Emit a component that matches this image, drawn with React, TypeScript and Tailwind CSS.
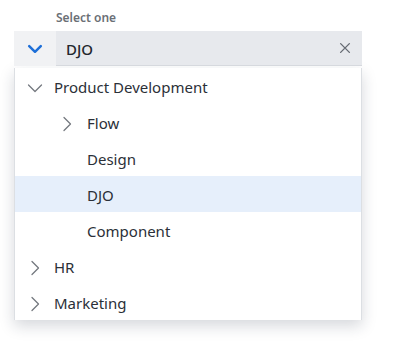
import React from "react";

type Node = { label: string; depth: number; chevron?: "down" | "right"; selected?: boolean };

const rows: Node[] = [
    { label: "Product Development", depth: 0, chevron: "down" },
    { label: "Flow", depth: 1, chevron: "right" },
    { label: "Design", depth: 1 },
    { label: "DJO", depth: 1, selected: true },
    { label: "Component", depth: 1 },
    { label: "HR", depth: 0, chevron: "right" },
    { label: "Marketing", depth: 0, chevron: "right" },
];

function Chevron({ dir, className }: { dir: "down" | "right"; className?: string }) {
    return (
        <svg viewBox="0 0 16 16" className={className} fill="none" stroke="currentColor" strokeWidth={1.25} strokeLinecap="round" strokeLinejoin="round">
            {dir === "down" ? <path d="M1.5 5l6.5 6.5L14.5 5" /> : <path d="M5 1.5l6.5 6.5L5 14.5" />}
        </svg>
    );
}

export default function App() {
    return (
        <div className="w-[396px] h-[358px] bg-white pt-[10px] pl-[14px]" style={{ fontFamily: "'Noto Sans', 'Open Sans', sans-serif" }}>
            <div className="w-[348px]">
                <p className="pl-[42px] text-[12px] font-semibold text-[#6b6f76] leading-[16px] mb-[5px]">Select one</p>
                <div className="flex h-[35px]">
                    <div className="w-[42px] bg-[#f1f2f4] flex items-center justify-center">
                        <svg viewBox="0 0 16 16" className="w-[16px] h-[16px] text-[#1d6fd8]" fill="none" stroke="currentColor" strokeWidth={2.5} strokeLinecap="round" strokeLinejoin="round">
                            <path d="M2.2 5.2l5.8 5.6 5.8-5.6" />
                        </svg>
                    </div>
                    <div className="flex-1 bg-[#e7e9ed] border-b border-[#d6d9de] flex items-center pl-[10px] pr-[10px]">
                        <span className="flex-1 text-[15px] font-medium text-[#23272e] pt-[2px]">DJO</span>
                        <svg viewBox="0 0 16 16" className="w-[14px] h-[14px] text-[#666b73]" fill="none" stroke="currentColor" strokeWidth={1.6} strokeLinecap="round">
                            <path d="M3 3l10 10M13 3L3 13" />
                        </svg>
                    </div>
                </div>
                <div className="mt-[2px] bg-white border-x border-[#dcdfe3] shadow-[0_6px_14px_rgba(30,40,60,0.18)]">
                    {rows.map((r) => (
                        <div key={r.label} className={`h-[36px] flex items-center text-[15px] text-[#2b3038] ${r.selected ? "bg-[#e6effb]" : ""}`}>
                            <div className={`flex items-center pt-[3px] ${r.depth === 0 ? "pl-[12px]" : "pl-[44px]"}`}>
                                <span className="w-[16px] h-[16px] flex items-center justify-center text-[#74787f]">
                                    {r.chevron && <Chevron dir={r.chevron} className="w-[16px] h-[16px]" />}
                                </span>
                                <span className={r.depth === 0 ? "ml-[11px]" : "ml-[12px]"}>{r.label}</span>
                            </div>
                        </div>
                    ))}
                </div>
            </div>
        </div>
    );
}
